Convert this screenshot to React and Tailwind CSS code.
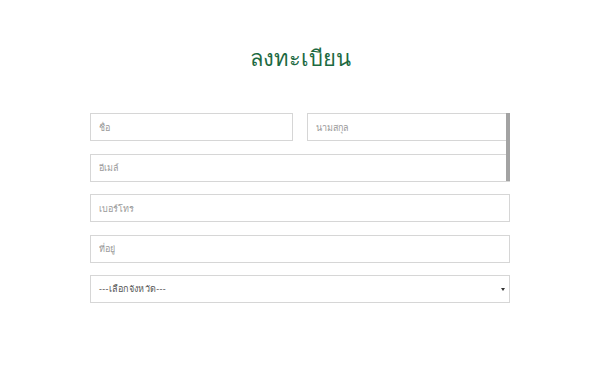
export default function App() {
  return (
    <div className="w-[600px] h-[375px] bg-white font-['Noto_Sans','DejaVu_Sans',sans-serif]">
      <div className="w-[420px] mx-auto pt-[39px]">
        <h1 className="text-center text-[22px] leading-[36px] text-[#1d6a42]">ลงทะเบียน</h1>

        <form className="relative mt-[38px] flex flex-col gap-[12.5px]">
          <div className="flex gap-[14px]">
            <Field placeholder="ชื่อ" className="w-[203px]" />
            <Field placeholder="นามสกุล" className="flex-1" />
          </div>
          <Field placeholder="อีเมล์" />
          <Field placeholder="เบอร์โทร" />
          <Field placeholder="ที่อยู่" />
          <div className="relative h-[28px] border border-[#d6d6d6] bg-white flex items-center px-[8px]">
            <span className="text-[9px] text-[#555] tracking-[0.3px]">---เลือกจังหวัด---</span>
            <span className="absolute right-[4px] top-[12px] w-0 h-0 border-l-[2px] border-r-[2px] border-t-[3px] border-l-transparent border-r-transparent border-t-[#333]"></span>
          </div>
          <span className="absolute right-0 top-0 w-[4px] h-[68px] bg-[#a3a3a3]"></span>
        </form>
      </div>
    </div>
  );
}

function Field({ placeholder, className = "" }) {
  return (
    <input
      type="text"
      placeholder={placeholder}
      className={`h-[28px] border border-[#d6d6d6] bg-white px-[8px] text-[9px] text-[#555] placeholder:text-[#9a9a9a] outline-none ${className}`}
    />
  );
}
